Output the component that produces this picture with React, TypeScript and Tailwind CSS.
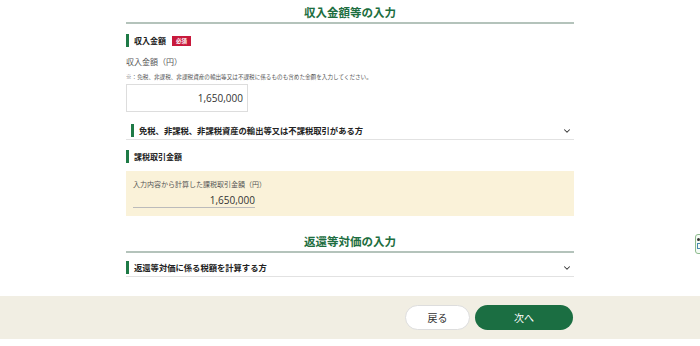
import { ChevronDown } from 'lucide-react';

function SectionTitle({ children }: { children: string }) {
  return (
    <div className="border-b-2 border-[#b4c3bb] pb-[1px] text-center text-[11.5px] font-bold leading-[17px] text-[#1d6e40]">
      {children}
    </div>
  );
}

function BarHeading({ children, size = 'text-[8px]' }: { children: React.ReactNode; size?: string }) {
  return (
    <div className="flex items-center gap-[5px]">
      <span className="h-[13px] w-[3px] bg-[#1e7a46]" />
      <span className={`${size} font-bold leading-[13px] text-[#222]`}>{children}</span>
    </div>
  );
}

function AccordionRow({ label, indent }: { label: string; indent?: boolean }) {
  return (
    <div className={`flex items-center justify-between border-b border-[#e2e2e2] pb-[2px] pr-[2px] ${indent ? 'pl-[5px]' : ''}`}>
      <BarHeading size="text-[8.3px]">{label}</BarHeading>
      <ChevronDown className="h-[10px] w-[10px] text-[#333]" strokeWidth={2.5} />
    </div>
  );
}

export default function App() {
  return (
    <div className="relative h-[346px] w-[700px] overflow-hidden bg-white" style={{ fontFamily: '"Noto Sans CJK JP", "Noto Sans", sans-serif' }}>
      <div className="mx-auto w-[448px] pt-[4px]">
        <SectionTitle>収入金額等の入力</SectionTitle>

        <div className="mt-[10px] flex items-center gap-[6px]">
          <BarHeading>収入金額</BarHeading>
          <span className="bg-[#c8193c] px-[4px] text-[5.5px] font-bold leading-[10px] text-white">必須</span>
        </div>

        <div className="mt-[9px] text-[8px] leading-[12px] text-[#555]">収入金額（円）</div>
        <div className="mt-[5px] text-[5.6px] leading-[9px] text-[#555]">
          ※：免税、非課税、非課税資産の輸出等又は不課税に係るものも含めた金額を入力してください。
        </div>
        <div className="mt-[2px] flex h-[28px] w-[122px] items-center justify-end border border-[#ddd] pr-[4px] text-[10px] text-[#333]" style={{ fontFamily: '"Open Sans", "Noto Sans", sans-serif' }}>
          1,650,000
        </div>

        <div className="mt-[12px]">
          <AccordionRow label="免税、非課税、非課税資産の輸出等又は不課税取引がある方" indent />
        </div>

        <div className="mt-[10px]">
          <BarHeading>課税取引金額</BarHeading>
        </div>

        <div className="mt-[8px] h-[45px] bg-[#faf2d9] px-[7px] pt-[8px]">
          <div className="text-[7px] leading-[10px] text-[#555]">入力内容から計算した課税取引金額（円）</div>
          <div className="mt-[4px] w-[122px] border-b border-[#bbb] text-right text-[10px] leading-[14px] text-[#333]" style={{ fontFamily: '"Open Sans", "Noto Sans", sans-serif' }}>
            1,650,000
          </div>
        </div>

        <div className="mt-[17px]">
          <SectionTitle>返還等対価の入力</SectionTitle>
        </div>

        <div className="mt-[8px]">
          <AccordionRow label="返還等対価に係る税額を計算する方" />
        </div>
      </div>

      <div className="absolute bottom-[7px] left-0 right-0 flex h-[43px] items-center justify-end gap-[5px] bg-[#f1eee3] pr-[127px]">
        <button className="h-[25px] w-[65px] rounded-full border border-[#ddd] bg-white text-[10px] text-[#333]">戻る</button>
        <button className="h-[25px] w-[98px] rounded-full bg-[#1b6e42] text-[10px] text-white">次へ</button>
      </div>

      <div className="absolute left-[695px] top-[234px] h-[20px] w-[10px] rounded-[3px] border border-[#8dbb8d] bg-[#f4fbf4]">
        <div className="ml-[1px] mt-[3px] h-[3px] w-[3px] rounded-full bg-[#333]" />
        <div className="ml-[1px] mt-[2px] h-[6px] w-[4px] border border-[#4a8ab0]" />
      </div>
    </div>
  );
}
